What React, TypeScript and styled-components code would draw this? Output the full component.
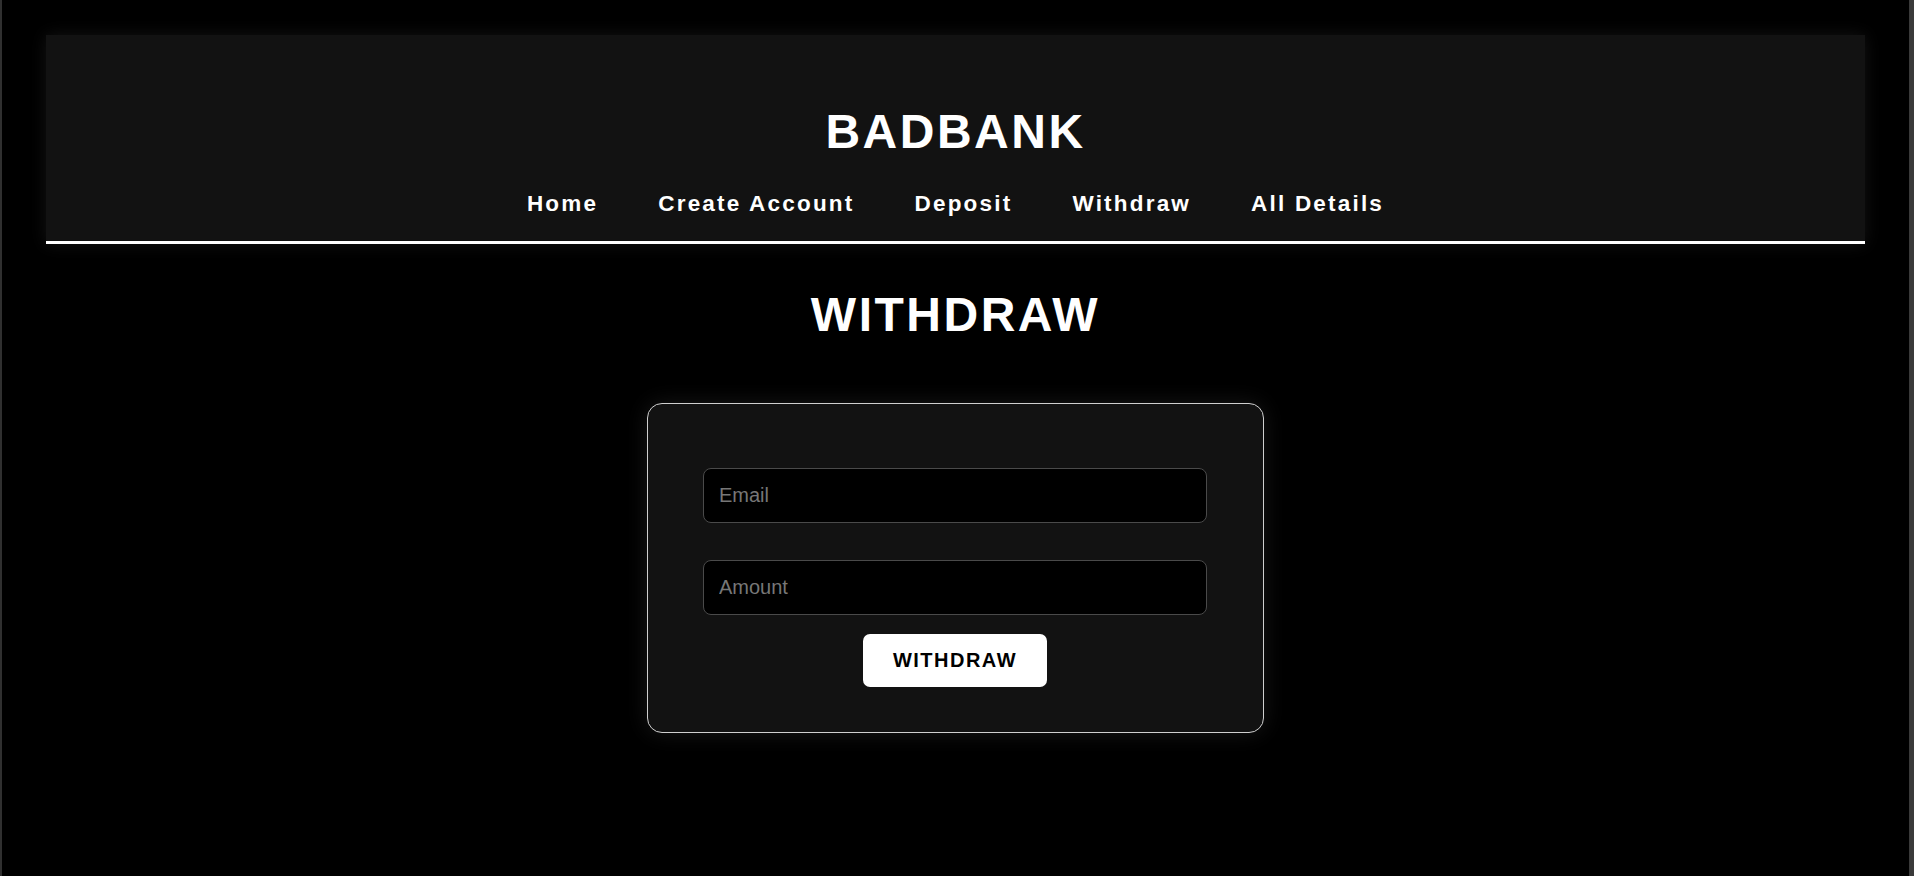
import styled, { createGlobalStyle } from "styled-components";

const GlobalStyle = createGlobalStyle`
  * {
    box-sizing: border-box;
  }
  html,
  body {
    margin: 0;
    padding: 0;
    background-color: #000;
  }
  body {
    font-family: "Liberation Sans", Arial, sans-serif;
    color: #fff;
    min-height: 100vh;
    border-left: 2px solid #303030;
    border-right: 5px solid #3a3a3a;
  }
`;

const navLinks = ["Home", "Create Account", "Deposit", "Withdraw", "All Details"];

export default function App() {
  return (
    <>
      <GlobalStyle />
      <Page>
        <Header>
          <Brand>BADBANK</Brand>
          <Nav>
            {navLinks.map((link) => (
              <NavLink key={link} href="#">
                {link}
              </NavLink>
            ))}
          </Nav>
        </Header>
        <Main>
          <PageTitle>WITHDRAW</PageTitle>
          <Card>
            <Form onSubmit={(e) => e.preventDefault()}>
              <Input type="email" placeholder="Email" />
              <Input type="number" placeholder="Amount" />
              <SubmitButton type="submit">WITHDRAW</SubmitButton>
            </Form>
          </Card>
        </Main>
      </Page>
    </>
  );
}

const Page = styled.div`
  min-height: 100vh;
  padding-top: 35px;
`;

const Header = styled.header`
  margin: 0 44px;
  padding: 69px 0 24px;
  background-color: #121212;
  border-bottom: 3px solid #fff;
  box-shadow: 0 0 16px rgba(255, 255, 255, 0.08);
  display: flex;
  flex-direction: column;
  align-items: center;
`;

const Brand = styled.h1`
  margin: 0;
  font-size: 48px;
  font-weight: 700;
  letter-spacing: 2.5px;
  line-height: normal;
  color: #fff;
`;

const Nav = styled.nav`
  margin-top: 32px;
  display: flex;
  gap: 60px;
`;

const NavLink = styled.a`
  font-size: 22.5px;
  font-weight: 700;
  letter-spacing: 2.2px;
  line-height: normal;
  color: #fff;
  text-decoration: none;
`;

const Main = styled.main`
  display: flex;
  flex-direction: column;
  align-items: center;
  padding-top: 43px;
`;

const PageTitle = styled.h2`
  margin: 0;
  font-size: 48px;
  font-weight: 700;
  letter-spacing: 2.5px;
  line-height: normal;
  color: #fff;
`;

const Card = styled.div`
  margin-top: 61px;
  width: 617px;
  padding: 64px 56px 45px 55px;
  background-color: #121212;
  border: 1px solid #cfcfcf;
  border-radius: 15px;
  box-shadow: 0 0 22px rgba(255, 255, 255, 0.09);
`;

const Form = styled.form`
  display: flex;
  flex-direction: column;
  align-items: center;
`;

const Input = styled.input`
  width: 100%;
  height: 55px;
  padding: 0 15px;
  background-color: #000;
  border: 1px solid #4a4a4a;
  border-radius: 8px;
  font-family: "Liberation Sans", Arial, sans-serif;
  font-size: 20px;
  color: #fff;
  outline: none;

  & + & {
    margin-top: 37px;
  }

  &::placeholder {
    color: #777;
  }

  &::-webkit-outer-spin-button,
  &::-webkit-inner-spin-button {
    -webkit-appearance: none;
    margin: 0;
  }
`;

const SubmitButton = styled.button`
  margin-top: 19px;
  width: 184px;
  height: 53px;
  padding: 0;
  background-color: #fff;
  color: #000;
  border: none;
  border-radius: 7px;
  font-family: "Liberation Sans", Arial, sans-serif;
  font-size: 20px;
  font-weight: 700;
  letter-spacing: 1.5px;
  cursor: pointer;
`;
